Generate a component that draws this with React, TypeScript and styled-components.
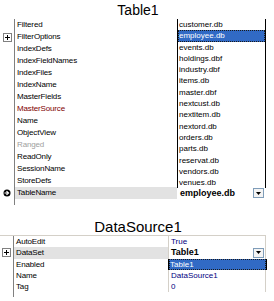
import styled, { createGlobalStyle } from "styled-components";

const GlobalStyle = createGlobalStyle`
  html, body {
    margin: 0;
    padding: 0;
    background: #ffffff;
  }
  body {
    font-family: "Liberation Sans", Arial, sans-serif;
  }
`;

const Page = styled.div`
  width: 274px;
  height: 301px;
  display: flex;
  flex-direction: column;
  overflow: hidden;
  background: #ffffff;
`;

const Title = styled.div<{ $height: number; $size: number }>`
  height: ${(p) => p.$height}px;
  display: flex;
  align-items: center;
  justify-content: center;
  font-size: ${(p) => p.$size}px;
  color: #000;
  padding-left: 2px;
`;

const Inspector = styled.div<{ $boxed?: boolean }>`
  position: relative;
  width: 266px;
  display: flex;
  flex-direction: column;
  border-top: ${(p) => (p.$boxed ? "1px solid #d4d0c8" : "none")};
`;

const Row = styled.div<{ $height: number; $selected?: boolean }>`
  display: flex;
  height: ${(p) => p.$height}px;
  font-size: 8px;
  line-height: ${(p) => p.$height}px;
  background: ${(p) => (p.$selected ? "#e2e2e2" : "transparent")};
`;

const Gutter = styled.div<{ $width: number }>`
  flex: 0 0 ${(p) => p.$width}px;
  background: #ffffff;
  border-right: 1px solid #808080;
  display: flex;
  align-items: center;
  justify-content: center;
`;

const Name = styled.div<{ $width: number; $tone?: "red" | "gray" }>`
  flex: 0 0 ${(p) => p.$width}px;
  padding-left: 2px;
  box-sizing: border-box;
  white-space: nowrap;
  overflow: hidden;
  letter-spacing: -0.15px;
  color: ${(p) =>
    p.$tone === "red" ? "#800000" : p.$tone === "gray" ? "#a0a0a0" : "#000"};
`;

const Value = styled.div<{ $bold?: boolean; $lined?: boolean }>`
  flex: 1;
  display: flex;
  align-items: center;
  padding-left: 2px;
  background: #ffffff;
  border-left: 1px solid ${(p) => (p.$lined ? "#d4d0c8" : "transparent")};
  border-right: 1px solid ${(p) => (p.$lined ? "#d4d0c8" : "transparent")};
  color: ${(p) => (p.$bold ? "#000" : "#000080")};
  font-weight: ${(p) => (p.$bold ? 700 : 400)};
  font-size: ${(p) => (p.$bold ? 9 : 8)}px;
  white-space: nowrap;
  span {
    flex: 1;
  }
`;

const DropButton = styled.div`
  flex: 0 0 9px;
  height: 8px;
  margin-right: 1px;
  border: 1px solid #7f9db9;
  background: #f4f4f4;
  display: flex;
  align-items: center;
  justify-content: center;
`;

const ListBox = styled.div<{ $left: number; $top: number; $width: number }>`
  position: absolute;
  left: ${(p) => p.$left}px;
  top: ${(p) => p.$top}px;
  width: ${(p) => p.$width}px;
  background: #ffffff;
  border-left: 1px solid #000;
  border-right: 1px solid #000;
  display: flex;
  flex-direction: column;
`;

const ListItem = styled.div<{ $height: number; $active?: boolean }>`
  height: ${(p) => p.$height}px;
  line-height: ${(p) => p.$height}px;
  font-size: 8px;
  padding-left: 1px;
  color: ${(p) => (p.$active ? "#fff" : "#000")};
  background: ${(p) => (p.$active ? "#316ac5" : "transparent")};
  outline: ${(p) => (p.$active ? "1px dotted #1a1a1a" : "none")};
  outline-offset: -1px;
`;

const Spacer = styled.div<{ $height: number }>`
  height: ${(p) => p.$height}px;
`;

function PlusBox() {
  return (
    <svg width="9" height="9" viewBox="0 0 9 9">
      <rect x="0.5" y="0.5" width="8" height="8" fill="#fff" stroke="#808080" />
      <path d="M2 4.5h5M4.5 2v5" stroke="#000" strokeWidth="1" />
    </svg>
  );
}

function Marker() {
  return (
    <svg width="8" height="8" viewBox="0 0 8 8">
      <circle cx="4" cy="4" r="3.5" fill="#000" />
      <path d="M1.5 4h3M3.5 2.2 5.5 4 3.5 5.8" stroke="#fff" strokeWidth="1.2" fill="none" />
    </svg>
  );
}

function Arrow() {
  return (
    <svg width="5" height="3" viewBox="0 0 5 3">
      <path d="M0 0h5L2.5 3z" fill="#000" />
    </svg>
  );
}

const tableProps: { name: string; tone?: "red" | "gray"; icon?: "plus" | "mark" }[] = [
  { name: "Filtered" },
  { name: "FilterOptions", icon: "plus" },
  { name: "IndexDefs" },
  { name: "IndexFieldNames" },
  { name: "IndexFiles" },
  { name: "IndexName" },
  { name: "MasterFields" },
  { name: "MasterSource", tone: "red" },
  { name: "Name" },
  { name: "ObjectView" },
  { name: "Ranged", tone: "gray" },
  { name: "ReadOnly" },
  { name: "SessionName" },
  { name: "StoreDefs" },
  { name: "TableName", icon: "mark" },
];

const files = [
  "customer.db",
  "employee.db",
  "events.db",
  "holdings.dbf",
  "industry.dbf",
  "items.db",
  "master.dbf",
  "nextcust.db",
  "nextitem.db",
  "nextord.db",
  "orders.db",
  "parts.db",
  "reservat.db",
  "vendors.db",
  "venues.db",
];

const sourceProps: { name: string; value?: string; bold?: boolean; icon?: boolean }[] = [
  { name: "AutoEdit", value: "True" },
  { name: "DataSet", value: "Table1", bold: true, icon: true },
  { name: "Enabled" },
  { name: "Name", value: "DataSource1" },
  { name: "Tag", value: "0" },
];

export default function App() {
  const rowH = 12;
  const srcH = 11.3;
  return (
    <Page>
      <GlobalStyle />
      <Title $height={19} $size={14}>
        Table1
      </Title>
      <Inspector>
        {tableProps.map((p) => {
          const last = p.name === "TableName";
          return (
            <Row key={p.name} $height={rowH} $selected={last}>
              <Gutter $width={14}>
                {p.icon === "plus" && <PlusBox />}
                {p.icon === "mark" && <Marker />}
              </Gutter>
              <Name $width={162} $tone={p.tone}>
                {p.name}
              </Name>
              <Value $bold>
                {last && (
                  <>
                    <span>employee.db</span>
                    <DropButton>
                      <Arrow />
                    </DropButton>
                  </>
                )}
              </Value>
            </Row>
          );
        })}
        <Row $height={6}>
          <Gutter $width={14} />
        </Row>
        <ListBox $left={177} $top={0} $width={87}>
          {files.map((f) => (
            <ListItem key={f} $height={11.3} $active={f === "employee.db"}>
              {f}
            </ListItem>
          ))}
        </ListBox>
      </Inspector>
      <Spacer $height={13} />
      <Title $height={17} $size={15}>
        DataSource1
      </Title>
      <Inspector $boxed>
        {sourceProps.map((p) => (
          <Row key={p.name} $height={srcH} $selected={p.bold}>
            <Gutter $width={13}>{p.icon && <PlusBox />}</Gutter>
            <Name $width={154}>{p.name}</Name>
            <Value $lined $bold={p.bold}>
              <span>{p.value}</span>
              {p.bold && (
                <DropButton>
                  <Arrow />
                </DropButton>
              )}
            </Value>
          </Row>
        ))}
        <Row $height={5}>
          <Gutter $width={13} />
        </Row>
        <ListBox $left={168} $top={srcH * 2} $width={97}>
          <ListItem $height={srcH} $active>
            Table1
          </ListItem>
        </ListBox>
      </Inspector>
    </Page>
  );
}
